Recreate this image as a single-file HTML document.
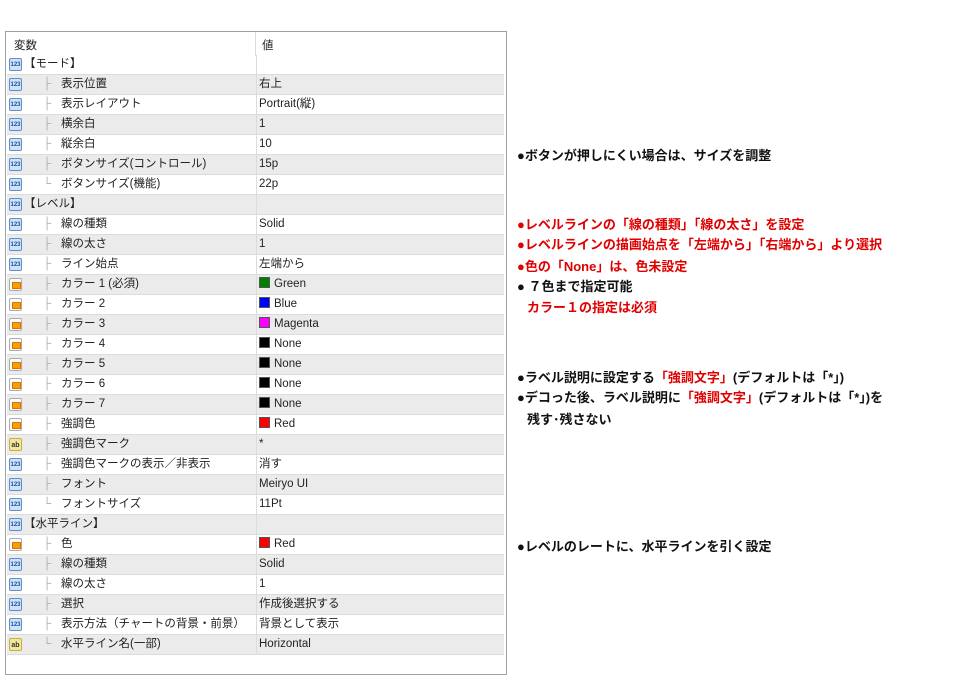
<!DOCTYPE html><html><head><meta charset="utf-8"><style>
body{margin:0;width:967px;height:699px;background:#fff;position:relative;font-family:"Liberation Sans","Noto Sans CJK JP",sans-serif;overflow:hidden}
.tbl{position:absolute;left:5px;top:31px;width:500px;height:642px;border:1px solid #a0a0a0;background:#fff}
.hd{position:absolute;left:0;top:0;width:500px;height:24px;font-size:11.5px;color:#222}
.r{position:absolute;left:2px;width:497px;height:20px;border-bottom:1px solid #dcdcdc;box-sizing:border-box;font-size:11.5px;color:#222;line-height:19px}
.g{background:#ebebeb}
.sep{position:absolute;left:249px;top:0;width:1px;height:100%;background:#dcdcdc}
.ic{position:absolute;left:2px;top:3px;width:13px;height:13px;border-radius:2px;font-size:6px;line-height:13px;text-align:center;font-weight:bold}
.n{background:#cfe2f7;border:1px solid #5b8fd0;color:#1a4fa0;box-sizing:border-box}
.c{background:#fff;border:1px solid #aaa;box-sizing:border-box}
.c:after{content:"";position:absolute;left:2px;top:3px;width:7px;height:5px;background:#f5a000;border:1px solid #e07000}
.a{background:#f3e79a;border:1px solid #c7b040;color:#333;box-sizing:border-box;font-size:7px}
.tr{position:absolute;left:36px;top:0;color:#aaa}
.lb{position:absolute;left:54px;top:0}
.lt{position:absolute;left:17px;top:0}
.v{position:absolute;left:252px;top:0}
.sw{display:inline-block;width:11px;height:11px;vertical-align:-1px;margin-right:4px;border:1px solid #555;box-sizing:border-box}
.t{position:absolute;left:517px;font-size:13px;font-weight:bold;color:#111;white-space:nowrap;line-height:20px}
.red{color:#e00000}
</style></head><body>
<div class="tbl">
<div class="hd"><span style="position:absolute;left:8px;top:5px">変数</span><span style="position:absolute;left:256px;top:5px">値</span><div class="sep"></div></div>
</div>
<div class="tbl" style="border:none;background:none">
<div class="r" style="top:24px"><span class="ic n">123</span><span class="lt">【モード】</span><div class="sep"></div></div>
<div class="r g" style="top:44px"><span class="ic n">123</span><span class="tr">├</span><span class="lb">表示位置</span><div class="sep"></div><span class="v">右上</span></div>
<div class="r" style="top:64px"><span class="ic n">123</span><span class="tr">├</span><span class="lb">表示レイアウト</span><div class="sep"></div><span class="v">Portrait(縦)</span></div>
<div class="r g" style="top:84px"><span class="ic n">123</span><span class="tr">├</span><span class="lb">横余白</span><div class="sep"></div><span class="v">1</span></div>
<div class="r" style="top:104px"><span class="ic n">123</span><span class="tr">├</span><span class="lb">縦余白</span><div class="sep"></div><span class="v">10</span></div>
<div class="r g" style="top:124px"><span class="ic n">123</span><span class="tr">├</span><span class="lb">ボタンサイズ(コントロール)</span><div class="sep"></div><span class="v">15p</span></div>
<div class="r" style="top:144px"><span class="ic n">123</span><span class="tr">└</span><span class="lb">ボタンサイズ(機能)</span><div class="sep"></div><span class="v">22p</span></div>
<div class="r g" style="top:164px"><span class="ic n">123</span><span class="lt">【レベル】</span><div class="sep"></div></div>
<div class="r" style="top:184px"><span class="ic n">123</span><span class="tr">├</span><span class="lb">線の種類</span><div class="sep"></div><span class="v">Solid</span></div>
<div class="r g" style="top:204px"><span class="ic n">123</span><span class="tr">├</span><span class="lb">線の太さ</span><div class="sep"></div><span class="v">1</span></div>
<div class="r" style="top:224px"><span class="ic n">123</span><span class="tr">├</span><span class="lb">ライン始点</span><div class="sep"></div><span class="v">左端から</span></div>
<div class="r g" style="top:244px"><span class="ic c"></span><span class="tr">├</span><span class="lb">カラー 1 (必須)</span><div class="sep"></div><span class="v"><span class="sw" style="background:#008000"></span>Green</span></div>
<div class="r" style="top:264px"><span class="ic c"></span><span class="tr">├</span><span class="lb">カラー 2</span><div class="sep"></div><span class="v"><span class="sw" style="background:#0000ff"></span>Blue</span></div>
<div class="r g" style="top:284px"><span class="ic c"></span><span class="tr">├</span><span class="lb">カラー 3</span><div class="sep"></div><span class="v"><span class="sw" style="background:#ff00ff"></span>Magenta</span></div>
<div class="r" style="top:304px"><span class="ic c"></span><span class="tr">├</span><span class="lb">カラー 4</span><div class="sep"></div><span class="v"><span class="sw" style="background:#000"></span>None</span></div>
<div class="r g" style="top:324px"><span class="ic c"></span><span class="tr">├</span><span class="lb">カラー 5</span><div class="sep"></div><span class="v"><span class="sw" style="background:#000"></span>None</span></div>
<div class="r" style="top:344px"><span class="ic c"></span><span class="tr">├</span><span class="lb">カラー 6</span><div class="sep"></div><span class="v"><span class="sw" style="background:#000"></span>None</span></div>
<div class="r g" style="top:364px"><span class="ic c"></span><span class="tr">├</span><span class="lb">カラー 7</span><div class="sep"></div><span class="v"><span class="sw" style="background:#000"></span>None</span></div>
<div class="r" style="top:384px"><span class="ic c"></span><span class="tr">├</span><span class="lb">強調色</span><div class="sep"></div><span class="v"><span class="sw" style="background:#ff0000"></span>Red</span></div>
<div class="r g" style="top:404px"><span class="ic a">ab</span><span class="tr">├</span><span class="lb">強調色マーク</span><div class="sep"></div><span class="v">*</span></div>
<div class="r" style="top:424px"><span class="ic n">123</span><span class="tr">├</span><span class="lb">強調色マークの表示／非表示</span><div class="sep"></div><span class="v">消す</span></div>
<div class="r g" style="top:444px"><span class="ic n">123</span><span class="tr">├</span><span class="lb">フォント</span><div class="sep"></div><span class="v">Meiryo UI</span></div>
<div class="r" style="top:464px"><span class="ic n">123</span><span class="tr">└</span><span class="lb">フォントサイズ</span><div class="sep"></div><span class="v">11Pt</span></div>
<div class="r g" style="top:484px"><span class="ic n">123</span><span class="lt">【水平ライン】</span><div class="sep"></div></div>
<div class="r" style="top:504px"><span class="ic c"></span><span class="tr">├</span><span class="lb">色</span><div class="sep"></div><span class="v"><span class="sw" style="background:#ff0000"></span>Red</span></div>
<div class="r g" style="top:524px"><span class="ic n">123</span><span class="tr">├</span><span class="lb">線の種類</span><div class="sep"></div><span class="v">Solid</span></div>
<div class="r" style="top:544px"><span class="ic n">123</span><span class="tr">├</span><span class="lb">線の太さ</span><div class="sep"></div><span class="v">1</span></div>
<div class="r g" style="top:564px"><span class="ic n">123</span><span class="tr">├</span><span class="lb">選択</span><div class="sep"></div><span class="v">作成後選択する</span></div>
<div class="r" style="top:584px"><span class="ic n">123</span><span class="tr">├</span><span class="lb">表示方法（チャートの背景・前景）</span><div class="sep"></div><span class="v">背景として表示</span></div>
<div class="r g" style="top:604px"><span class="ic a">ab</span><span class="tr">└</span><span class="lb">水平ライン名(一部)</span><div class="sep"></div><span class="v">Horizontal</span></div>
</div>
<div class="t" style="top:146px">●ボタンが押しにくい場合は、サイズを調整</div>
<div class="t red" style="top:215px">●レベルラインの「線の種類」「線の太さ」を設定</div>
<div class="t red" style="top:235px">●レベルラインの描画始点を「左端から」「右端から」より選択</div>
<div class="t red" style="top:257px">●色の「None」は、色未設定</div>
<div class="t" style="top:277px">● ７色まで指定可能</div>
<div class="t red" style="top:298px;left:527px">カラー１の指定は必須</div>
<div class="t" style="top:368px">●ラベル説明に設定する<span class="red">「強調文字」</span>(デフォルトは「*」)</div>
<div class="t" style="top:388px">●デコった後、ラベル説明に<span class="red">「強調文字」</span>(デフォルトは「*」)を</div>
<div class="t" style="top:410px;left:527px">残す･残さない</div>
<div class="t" style="top:537px">●レベルのレートに、水平ラインを引く設定</div>
</body></html>
